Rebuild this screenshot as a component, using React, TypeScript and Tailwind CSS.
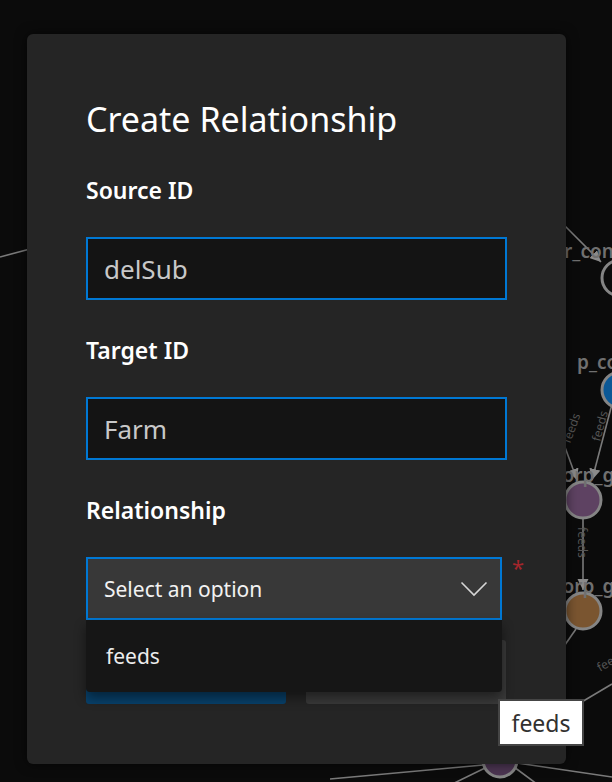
import React from "react";

function Graph() {
  const stroke = "#7a7a7a";
  return (
    <svg
      className="absolute inset-0"
      width={612}
      height={782}
      viewBox="0 0 612 782"
    >
      <defs>
        <marker
          id="arr"
          viewBox="0 0 10 10"
          refX="10"
          refY="5"
          markerWidth="7"
          markerHeight="7"
          orient="auto-start-reverse"
        >
          <path d="M0,0 L10,5 L0,10 z" fill="#8a8a8a" />
        </marker>
      </defs>
      <g stroke={stroke} strokeWidth="1.6" fill="none">
        <line x1="0" y1="257" x2="30" y2="249" />
        <line x1="560" y1="221" x2="601" y2="262" markerEnd="url(#arr)" />
        <line x1="612" y1="404" x2="592" y2="480" markerEnd="url(#arr)" />
        <line x1="558" y1="428" x2="577" y2="480" markerEnd="url(#arr)" />
        <line x1="583" y1="519" x2="583" y2="590" markerEnd="url(#arr)" />
        <line x1="576" y1="629" x2="560" y2="652" />
        <line x1="612" y1="684" x2="580" y2="703" />
        <line x1="330" y1="779" x2="483" y2="765" />
        <line x1="440" y1="790" x2="485" y2="768" />
        <line x1="517" y1="763" x2="612" y2="777" />
        <line x1="514" y1="767" x2="545" y2="790" />
      </g>
      <g stroke="#858585" strokeWidth="3">
        <circle cx="620" cy="278" r="18" fill="#0c0c0c" />
        <circle cx="620" cy="390" r="18" fill="#0b5896" />
        <circle cx="583" cy="500" r="18" fill="#5e4262" />
        <circle cx="583" cy="611" r="18" fill="#7a5530" />
        <circle cx="500" cy="760" r="17" fill="#4c3552" />
      </g>
      <g
        fill="#707070"
        fontFamily="'Noto Sans', sans-serif"
        fontWeight="600"
        fontSize="19"
      >
        <text x="553" y="258">er_con</text>
        <text x="577" y="369">p_co</text>
        <text x="553" y="482">corp_ge</text>
        <text x="553" y="593">corp_g</text>
      </g>
      <g
        fill="#555555"
        fontFamily="'Noto Sans', sans-serif"
        fontSize="12"
      >
        <text transform="translate(600,442) rotate(-75)">feeds</text>
        <text transform="translate(578,527) rotate(90)">feeds</text>
        <text transform="translate(570,444) rotate(-70)">feeds</text>
        <text transform="translate(600,672) rotate(-30)">feeds</text>
      </g>
    </svg>
  );
}

function Field({
  label,
  value,
  top,
}: {
  label: string;
  value: string;
  top: string;
}) {
  return (
    <>
      <div
        className={`${top} h-[32px] text-[23px] leading-[32px] font-semibold text-white`}
      >
        {label}
      </div>
      <div className="mt-[31px] flex h-[63px] w-[421px] items-center border-2 border-[#0078d4] bg-[#141414] px-[16px]">
        <span className="text-[26px] leading-[34px] text-[#c8c8c8]">{value}</span>
      </div>
    </>
  );
}

export default function App() {
  return (
    <div className="relative h-[782px] w-[612px] overflow-hidden bg-[#0b0b0b] font-['Noto_Sans',sans-serif]">
      <Graph />
      <div className="relative pl-[27px] pt-[34px]">
        <div className="h-[730px] w-[539px] rounded-[6px] bg-[#252525] px-[59px] pt-[61px] shadow-[0_0_12px_rgba(0,0,0,0.6)]">
          <h1 className="h-[48px] text-[34px] font-normal leading-[48px] text-white">
            Create Relationship
          </h1>
          <Field label="Source ID" value="delSub" top="mt-[31px]" />
          <Field label="Target ID" value="Farm" top="mt-[34px]" />
          <div className="mt-[34px] h-[32px] text-[23px] font-semibold leading-[32px] text-white">
            Relationship
          </div>
          <div className="relative mt-[31px] flex items-start">
            <div className="relative w-[416px] shrink-0">
              <div className="flex h-[63px] items-center justify-between border-2 border-[#0078d4] bg-[#383838] pl-[16px] pr-[12px]">
                <span className="text-[21px] leading-[32px] text-[#f2f2f2]">
                  Select an option
                </span>
                <svg width="28" height="16" viewBox="0 0 28 16" fill="none">
                  <polyline
                    points="1.5,1.5 14,14 26.5,1.5"
                    stroke="#d6d6d6"
                    strokeWidth="1.6"
                  />
                </svg>
              </div>
              <div className="absolute left-0 top-[63px] z-10 flex h-[72px] w-[416px] items-center rounded-b-[4px] bg-[#161616] pl-[20px] shadow-[0_6px_12px_rgba(0,0,0,0.45)]">
                <span className="text-[21px] leading-[32px] text-[#ececec]">feeds</span>
              </div>
            </div>
            <span className="ml-[10px] mt-[-2px] shrink-0 text-[22px] leading-[24px] text-[#a4262c]">
              *
            </span>
          </div>
          <div className="mt-[20px] flex gap-[20px]">
            <div className="h-[64px] w-[200px] rounded-[3px] bg-[#08416b]" />
            <div className="h-[64px] w-[200px] rounded-[3px] bg-[#3a3a3a]" />
          </div>
        </div>
      </div>
      <div className="absolute left-[498px] top-[699px] z-20 flex h-[47px] w-[86px] items-center justify-center border-2 border-[#454545] bg-white">
        <span className="text-[23px] leading-[30px] text-[#323130]">feeds</span>
      </div>
    </div>
  );
}
